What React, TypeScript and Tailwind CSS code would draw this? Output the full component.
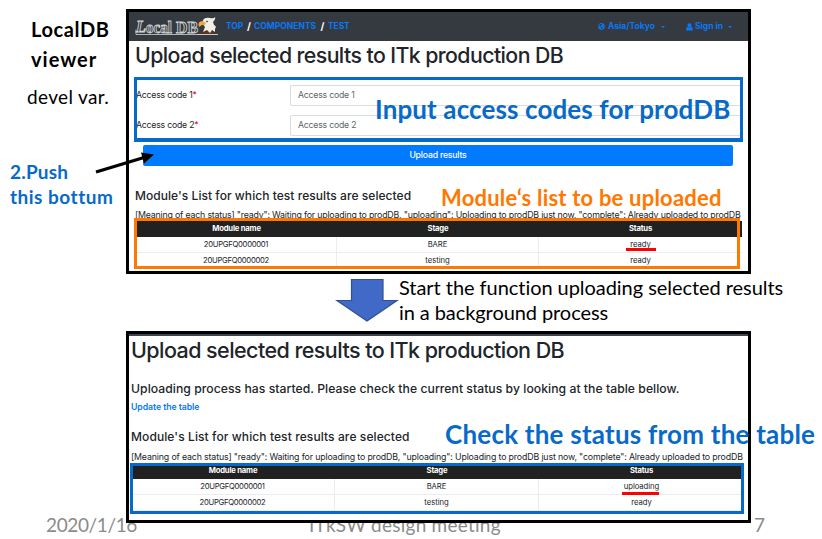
import type { ReactNode } from "react";
import { FaGlobeAmericas } from "react-icons/fa";

const legend =
  '[Meaning of each status] "ready": Waiting for uploading to prodDB, "uploading": Uploading to prodDB just now, "complete": Already uploaded to prodDB';

function Logo() {
  return (
    <div className="flex h-[22px] w-[83px] items-center">
      <svg width="83" height="22" viewBox="0 0 83 22">
        <path d="M1 13.5V18.5H63" stroke="#b0b4b7" strokeWidth="1" fill="none" />
        <g fontFamily="Liberation Serif, serif" fontWeight="700" fill="#343a40" stroke="#d0d3d5" strokeWidth="0.9">
          <text x="1" y="16" fontSize="17" fontStyle="italic" textLength="10" lengthAdjust="spacingAndGlyphs">
            L
          </text>
          <text x="11" y="17" fontSize="17" textLength="26" lengthAdjust="spacingAndGlyphs">
            ocal
          </text>
          <text x="41" y="17" fontSize="17" textLength="22" lengthAdjust="spacingAndGlyphs">
            DB
          </text>
        </g>
        <path d="M63 19Q68 17 69 12L80 13L79 17L82 19Z" fill="#5b351d" />
        <path d="M68 4Q70 1 75 2Q79 3 80 1Q81 3 78 6L79 9Q82 10 80 13L80 16L77 14L75 17L72 14L68 16L70 11Q67 8 68 4Z" fill="#f3efe7" />
        <path d="M64 11Q62 5 68 5L71 7L70 9L67 9Z" fill="#efa944" />
        <circle cx="72" cy="5.5" r="0.8" fill="#222" />
        <path d="M62 18.5H83" stroke="#c8cbcd" />
      </svg>
    </div>
  );
}

function UserIcon() {
  return (
    <svg className="mr-[2px] ml-[21px] h-[8px] w-[7px] shrink-0" viewBox="0 0 7 8" fill="currentColor">
      <circle cx="3.5" cy="2.2" r="2" />
      <path d="M0.2 7.6V6Q0.2 4 1.7 3.8Q3.5 5.2 5.3 3.8Q6.8 4 6.8 6V7.6Z" />
    </svg>
  );
}

function Caret() {
  return <span className="mt-px h-0 w-0 border-x-2 border-t-2 border-x-transparent border-t-[#0878f8]" />;
}

function Navbar() {
  return (
    <nav className="flex h-[29px] shrink-0 items-center bg-[#343a40] pl-1.5 text-[8.5px] font-bold text-[#0878f8]">
      <Logo />
      <div className="ml-2 flex items-center">
        <span className="w-[18px] tracking-[-0.1px]">TOP</span>
        <span className="w-[10px] text-center text-[10px] text-white">/</span>
        <span className="w-[63px] whitespace-nowrap">COMPONENTS</span>
        <span className="w-[11px] text-center text-[10px] text-white">/</span>
        <span className="tracking-[-0.1px]">TEST</span>
      </div>
      <div className="mr-[16px] ml-auto flex items-center">
        <FaGlobeAmericas className="mr-[3px] size-[7px]" />
        <span className="mr-[5px] w-[48px] whitespace-nowrap">Asia/Tokyo</span>
        <Caret />
        <UserIcon />
        <span className="mr-[4px] w-[29px] whitespace-nowrap">Sign in</span>
        <Caret />
      </div>
    </nav>
  );
}

function Field({ label }: { label: string }) {
  return (
    <div className="flex h-[21px] items-center text-[8.7px] tracking-[-0.2px]">
      <label className="w-[155px] pl-px text-[#212529]">
        {label}
        <span className="text-[#f00020]">*</span>
      </label>
      <div className="flex h-[21px] flex-1 items-center rounded-l-[2px] border border-r-0 border-[#d9dde0] pl-[7px] text-[#5d656d]">
        {label}
      </div>
    </div>
  );
}

function Table({ rows, cols }: { rows: string[][]; cols: string }) {
  return (
    <div className="text-center text-[7.7px] text-[#212529]">
      <div className={`grid h-[16px] items-center bg-[#212121] font-bold tracking-[-0.2px] text-white ${cols}`}>
        <span>Module name</span>
        <span>Stage</span>
        <span>Status</span>
      </div>
      {rows.map((row) => (
        <div key={row[0]} className={`grid h-[16px] border-b border-[#ececec] leading-[15px] ${cols}`}>
          <span className="border-r border-[#ececec] tracking-[-0.3px]">{row[0]}</span>
          <span className="border-r border-[#ececec] tracking-[-0.05px]">{row[1]}</span>
          <span className="tracking-[-0.05px]">{row[2]}</span>
        </div>
      ))}
    </div>
  );
}

function Note({ className, children }: { className: string; children: ReactNode }) {
  return (
    <div className={`absolute whitespace-nowrap font-['Lato','Liberation_Sans',sans-serif] ${className}`}>
      {children}
    </div>
  );
}

function UploadForm() {
  return (
    <section className="relative flex h-[265px] w-[625px] flex-col overflow-hidden border-[3px] border-black bg-white">
      <Navbar />
      <h1 className="h-[36px] pl-[6px] text-[21.3px] leading-[29px] font-medium tracking-[-0.58px] whitespace-nowrap">
        Upload selected results to ITk production DB
      </h1>
      <div className="ml-[5px] flex h-[65px] w-[609px] flex-col overflow-hidden border-[3px] border-b-4 border-[#086ac8] pt-[5px]">
        <div className="-ml-[2px] flex flex-col gap-[9px]">
          <Field label="Access code 1" />
          <Field label="Access code 2" />
        </div>
      </div>
      <button className="mt-[3px] ml-[14px] h-[21px] w-[590px] shrink-0 rounded-[2px] bg-[#007bff] text-[8.7px] leading-[21px] font-medium tracking-[-0.2px] text-white">
        Upload results
      </button>
      <h2 className="mt-[20px] h-[20px] shrink-0 pl-[6px] text-[12px] leading-[20px] font-medium tracking-[0.05px] whitespace-nowrap">
        Module's List for which test results are selected
      </h2>
      <p className="h-[15px] shrink-0 pl-[6px] text-[8.8px] leading-[18px] tracking-[-0.187px] whitespace-nowrap">{legend}</p>
      <div className="ml-[7px] w-[606px]">
        <Table
          cols="grid-cols-[201px_202px_203px]"
          rows={[
            ["20UPGFQ0000001", "BARE", "ready"],
            ["20UPGFQ0000002", "testing", "ready"],
          ]}
        />
      </div>
      <div className="absolute top-[206px] left-[5px] h-[51px] w-[606px] border-[3px] border-[#ff7800]" />
      <div className="absolute top-[236px] left-[497px] h-[3px] w-[30px] bg-[#ff0000]" />
    </section>
  );
}

function UploadStatus() {
  return (
    <section className="relative flex h-[192px] w-[625px] flex-col border-[3px] border-black bg-white">
      <div className="h-[2px] shrink-0 bg-[#3d444b]" />
      <h1 className="h-[42px] pl-[2px] text-[21.5px] leading-[29px] font-medium tracking-[-0.565px] whitespace-nowrap">
        Upload selected results to ITk production DB
      </h1>
      <h2 className="h-[22px] pl-[2px] text-[12.2px] leading-[22px] font-medium tracking-[0.04px] whitespace-nowrap">
        Uploading process has started. Please check the current status by looking at the table bellow.
      </h2>
      <a className="h-[16px] pl-[2px] text-[8.7px] leading-[14px] font-semibold tracking-[-0.05px] text-[#0878f8]">
        Update the table
      </a>
      <h2 className="mt-[11px] h-[20px] pl-[2px] text-[12px] leading-[20px] font-medium tracking-[0.1px] whitespace-nowrap">
        Module's List for which test results are selected
      </h2>
      <p className="h-[16px] pl-[2px] text-[8.8px] leading-[19px] tracking-[-0.145px] whitespace-nowrap">{legend}</p>
      <div className="ml-[2px] w-[613px]">
        <Table
          cols="grid-cols-[204px_204px_205px]"
          rows={[
            ["20UPGFQ0000001", "BARE", "uploading"],
            ["20UPGFQ0000002", "testing", "ready"],
          ]}
        />
      </div>
      <div className="absolute top-[129px] left-px h-[51px] w-[614px] border-[3px] border-[#086ac8]" />
      <div className="absolute top-[158px] left-[493px] h-[3px] w-[37px] bg-[#ff0000]" />
    </section>
  );
}

export default function App() {
  return (
    <main className="relative h-[539px] w-[822px] overflow-hidden bg-white font-['Inter','Liberation_Sans',sans-serif] text-[#212529]">
      <footer className="absolute inset-x-0 top-[513px] flex font-['Lato','Liberation_Sans',sans-serif] text-[19px] leading-[24px] text-[#8b8b8b]">
        <span className="ml-[46px] w-[263px] tracking-[-0.37px]">2020/1/16</span>
        <span className="w-[445px] tracking-[0.25px]">ITkSW design meeting</span>
        <span>7</span>
      </footer>

      <div className="relative flex flex-col pt-[9px] pl-[126px]">
        <UploadForm />
        <div className="flex h-[57px] pt-[2px] pl-[209px] text-black">
          <svg className="mt-[2px] shrink-0" width="64" height="44" viewBox="0 0 64 44">
            <path d="M16.5 1.5H48V22.5H62L32 43L2 22.5H16.5Z" fill="#4169c8" stroke="#2f528f" strokeWidth="1.2" />
          </svg>
          <p className="-mt-px font-['Lato','Liberation_Sans',sans-serif] text-[20px] leading-[25px] whitespace-nowrap">
            <span className="block tracking-[-0.05px]">Start the function uploading selected results</span>
            <span className="block tracking-[-0.08px]">in a background process</span>
          </p>
        </div>
        <UploadStatus />
      </div>

      <Note className="top-[15px] left-[31px] text-[20px] leading-[29.5px] font-bold text-black">
        <span className="block tracking-[0.6px]">LocalDB</span>
        <span className="block tracking-[1px]">viewer</span>
      </Note>
      <Note className="top-[84px] left-[27px] text-[19px] leading-[25px] tracking-[0.35px] text-black">devel var.</Note>
      <Note className="top-[159px] left-[10px] text-[19px] leading-[25px] font-bold text-[#086ac8]">
        <span className="block tracking-[0.2px]">2.Push</span>
        <span className="block tracking-[0.5px]">this bottum</span>
      </Note>
      <Note className="top-[93px] left-[375px] text-[26px] leading-[32px] font-bold tracking-[0.12px] text-[#086ac8]">
        Input access codes for prodDB
      </Note>
      <Note className="top-[184px] left-[441px] text-[22px] leading-[28px] font-bold tracking-[0.2px] text-[#ff7800]">
        Module‘s list to be uploaded
      </Note>
      <Note className="top-[418px] left-[445px] text-[26px] leading-[32px] font-bold tracking-[0.22px] text-[#086ac8]">
        Check the status from the table
      </Note>
      <svg className="absolute top-[148px] left-[92px]" width="66" height="30" viewBox="0 0 66 30">
        <path d="M4 24L52 9.5" stroke="#000" strokeWidth="3.2" />
        <path d="M49 4.5L62 6.5L52 15.5Z" fill="#000" />
      </svg>
    </main>
  );
}
